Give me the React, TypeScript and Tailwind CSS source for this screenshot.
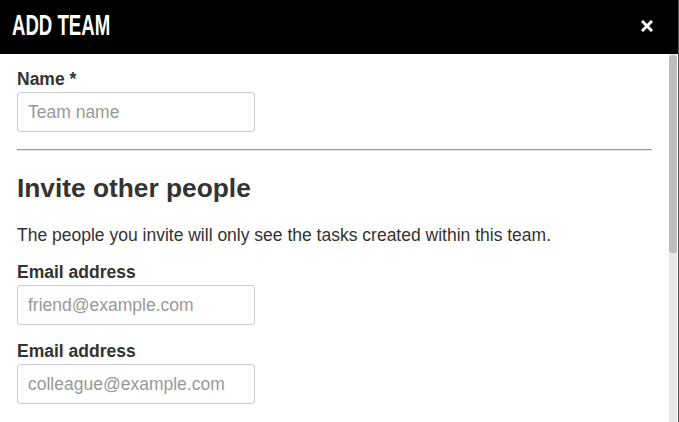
import React from 'react';

const Field: React.FC<{ label: string; placeholder: string }> = ({ label, placeholder }) => (
  <div className="flex flex-col">
    <label className="text-[17.5px] leading-[20px] font-bold text-[#333]">{label}</label>
    <input
      type="text"
      placeholder={placeholder}
      className="mt-[3px] w-[238px] h-[40px] rounded-[3px] border border-[#ccc] px-[10px] text-[17.5px] text-[#333] placeholder:text-[#999] outline-none"
    />
  </div>
);

export default function App() {
  return (
    <div className="w-[679px] h-[422px] flex bg-white overflow-hidden font-['Liberation_Sans',Arial,sans-serif]">
      <div className="w-[678px] flex flex-col">
        <div className="h-[54px] shrink-0 bg-black flex items-center justify-between pl-[12px] pr-[25px]">
          <h1 className="text-white text-[30px] leading-[30px] font-bold origin-left [transform:translateY(-2px)_scaleX(0.62)] whitespace-nowrap">
            ADD TEAM
          </h1>
          <svg width="12" height="12" viewBox="0 0 12 12" className="-mt-[2px]">
            <path d="M2 2 L10 10 M10 2 L2 10" stroke="white" strokeWidth="3" strokeLinecap="square" />
          </svg>
        </div>
        <div className="flex flex-1 min-h-0">
          <div className="flex-1 pl-[17px] pr-[17px] pt-[15px]">
            <Field label="Name *" placeholder="Team name" />
            <div className="mt-[17px] h-[2px] border-t border-[#999] border-b border-b-[#e6e6e6]" />
            <h2 className="mt-[21px] text-[26.3px] leading-[32px] font-bold text-[#333]">Invite other people</h2>
            <p className="mt-[20px] text-[17.5px] leading-[22px] text-[#333] whitespace-nowrap">
              The people you invite will only see the tasks created within this team.
            </p>
            <div className="mt-[16px] flex flex-col gap-[16px]">
              <Field label="Email address" placeholder="friend@example.com" />
              <Field label="Email address" placeholder="colleague@example.com" />
            </div>
          </div>
          <div className="w-[9px] flex">
            <div className="w-[8px] bg-[#e8e8e8] flex flex-col pt-[1px]">
              <div className="h-[198px] bg-[#bdbdbd] rounded-t-[4px] rounded-b-[3px]" />
            </div>
          </div>
        </div>
      </div>
      <div className="w-[1px] bg-[#555]" />
    </div>
  );
}
